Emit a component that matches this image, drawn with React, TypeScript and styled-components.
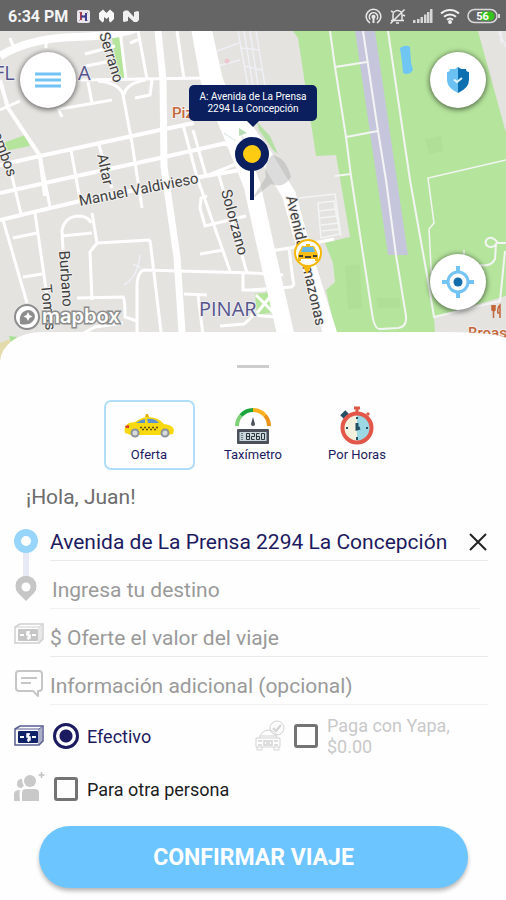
import React, { useState } from "react";
import styled, { createGlobalStyle } from "styled-components";

const NAVY = "#1c1a60";
const SKY = "#6cc5ff";

const GlobalStyle = createGlobalStyle`
  *, *::before, *::after { box-sizing: border-box; }
  body {
    margin: 0;
    background: #fff;
    font-family: Roboto, "Noto Sans", sans-serif;
    color: ${NAVY};
  }
  button, input { font: inherit; color: inherit; }
`;

const Screen = styled.div`
  display: flex;
  flex-direction: column;
  min-height: 100vh;
`;

const StatusBar = styled.header`
  display: flex;
  align-items: center;
  justify-content: space-between;
  height: 31px;
  padding: 1px 6px 0 8px;
  background: #656565;
  color: #f4f4f4;
`;

const StatusGroup = styled.div<{ $gap: number }>`
  display: flex;
  align-items: center;
  gap: ${(p) => p.$gap}px;
`;

const Clock = styled.time`
  font-size: 16px;
  font-weight: 700;
`;

const MapArea = styled.section`
  position: relative;
  height: 331px;
  overflow: hidden;
  background: #e4e3e0;
`;

const MapSvg = styled.svg`
  display: block;
  width: 100%;
  height: 100%;
`;

const StreetLabel = styled.text`
  font-family: Roboto, sans-serif;
  font-size: 15px;
  fill: #404040;
  stroke: #f1f0ee;
  stroke-width: 2px;
  paint-order: stroke;
`;

const DistrictLabel = styled.text`
  font-family: "Open Sans", sans-serif;
  font-size: 20px;
  fill: #55558c;
  stroke: #eeedf0;
  stroke-width: 2px;
  paint-order: stroke;
`;

const PlaceLabel = styled.text`
  font-family: Roboto, sans-serif;
  font-size: 15px;
  font-weight: 500;
  fill: #c4673a;
  stroke: #f3efec;
  stroke-width: 2px;
  paint-order: stroke;
`;

const MapboxWord = styled.text`
  font-family: Inter, sans-serif;
  font-size: 20px;
  font-weight: 600;
  fill: #fff;
  stroke: #8d8d8d;
  stroke-width: 3px;
  paint-order: stroke;
`;

const RoundButton = styled.button<{ $side: "left" | "right"; $top: number }>`
  position: absolute;
  top: ${(p) => p.$top}px;
  ${(p) => p.$side}: 20px;
  display: grid;
  place-items: center;
  width: 56px;
  height: 56px;
  padding: 0;
  border: 0;
  border-radius: 50%;
  background: #fff;
  box-shadow: 0 1px 5px 1px rgba(0, 0, 0, 0.5);
  cursor: pointer;
`;

const Callout = styled.div`
  position: absolute;
  top: 54px;
  left: 50%;
  width: 128px;
  padding: 6px 4px;
  transform: translateX(-50%);
  border-radius: 5px;
  background: #0b1f5e;
  color: #fff;
  font-size: 10px;
  line-height: 12px;
  text-align: center;

  &::after {
    content: "";
    position: absolute;
    top: 100%;
    left: 50%;
    transform: translateX(-50%);
    border: 6px solid transparent;
    border-top-color: #0b1f5e;
    border-bottom: 0;
  }
`;

const Sheet = styled.main`
  position: relative;
  flex: 1;
  margin-top: -30px;
  padding-bottom: 12px;
  border-radius: 42px 60px 0 0 / 30px 7px 0 0;
  background: #fefefe;
`;

const Handle = styled.div`
  width: 32px;
  height: 3px;
  margin: 33px auto 32px;
  background: #cdcdcd;
`;

const ServiceTabs = styled.div`
  display: flex;
  justify-content: center;
  gap: 13px;
`;

const ServiceTab = styled.button`
  display: flex;
  flex-direction: column;
  align-items: center;
  width: 91px;
  height: 70px;
  padding: 4px 0 0;
  border: 2px solid transparent;
  border-radius: 7px;
  background: transparent;
  font-size: 13px;
  line-height: 17px;
  cursor: pointer;

  &[aria-selected="true"] {
    border-color: #b0defa;
  }
`;

const Greeting = styled.p`
  margin: 0;
  padding: 15px 26px 4px;
  font-size: 21px;
  line-height: 24px;
  color: #6c6c6c;
`;

const Fields = styled.div`
  display: grid;
  grid-template-columns: 50px 1fr;
  padding-right: 18px;
`;

const Rail = styled.svg`
  grid-row: span 2;
`;

const FieldIcon = styled.label`
  display: block;
  height: 48px;
  padding: 13px 0 0 14px;
`;

const Field = styled.div<{ $short?: boolean; $faint?: boolean }>`
  display: flex;
  align-items: center;
  height: 48px;
  margin-right: ${(p) => (p.$short ? 8 : 0)}px;
  padding-top: 10px;
  border-bottom: 1px solid ${(p) => (p.$faint ? "#f1f1f1" : "#e9e9e9")};
`;

const TextInput = styled.input<{ $indent?: boolean }>`
  flex: 1;
  min-width: 0;
  padding: 0 0 0 ${(p) => (p.$indent ? 2 : 0)}px;
  border: 0;
  outline: 0;
  background: transparent;
  font-size: 21px;
  line-height: 28px;

  &::placeholder {
    color: #9a9a9a;
    opacity: 1;
  }
`;

const ClearButton = styled.button`
  display: grid;
  place-items: center;
  width: 20px;
  height: 24px;
  padding: 0;
  border: 0;
  background: transparent;
  cursor: pointer;
`;

const OptionsRow = styled.div<{ $height: number }>`
  display: grid;
  grid-template-columns: 241px 1fr;
  align-items: center;
  height: ${(p) => p.$height}px;
  padding-left: 14px;
`;

const Option = styled.label<{ $tone: string }>`
  display: flex;
  align-items: center;
  gap: 8px;
  color: ${(p) => p.$tone};
  font-size: 18px;
  line-height: 21px;
  white-space: pre-line;
`;

const Radio = styled.input`
  appearance: none;
  flex: none;
  width: 26px;
  height: 26px;
  margin: 0;
  border: 3px solid ${NAVY};
  border-radius: 50%;

  &:checked {
    background: radial-gradient(circle, ${NAVY} 6px, transparent 7px);
  }
`;

const CheckBox = styled.input`
  appearance: none;
  flex: none;
  width: 24px;
  height: 24px;
  margin: 1px;
  border: 3px solid #747474;
  border-radius: 3px;

  &:checked {
    background: #747474;
  }
`;

const ConfirmButton = styled.button`
  display: block;
  width: calc(100% - 77px);
  height: 62px;
  margin: 15px 38px 0 39px;
  border: 0;
  border-radius: 31px;
  background: ${SKY};
  box-shadow: 0 3px 4px rgba(0, 0, 0, 0.28);
  color: #fff;
  font-size: 23px;
  font-weight: 700;
  cursor: pointer;
`;

function StatusIcons() {
  return (
    <StatusGroup $gap={7}>
      <svg width="17" height="17" viewBox="0 0 17 17" fill="none" stroke="#e9e9e9" strokeWidth="1.5">
        <path d="M5 15A7.3 7.3 0 1 1 12 15" />
        <path d="M5.3 11.6A4.2 4.2 0 1 1 11.7 11.6" />
        <circle cx="8.5" cy="8.7" r="1.3" fill="#e9e9e9" />
        <path d="M8.5 10v5" strokeWidth="2" />
      </svg>
      <svg width="17" height="17" viewBox="0 0 17 17" fill="none" stroke="#e9e9e9" strokeWidth="1.5">
        <path d="M4 12V7a4.500 4.500 0 0 1 9 0v5M2 12.500h13M7 15h3M1.500 15.500l14-14M2 3l2 1M14 7l2 1" />
      </svg>
      <svg width="20" height="16" viewBox="0 0 20 16" fill="#d6d6d6">
        <path d="M0 12h2.500v3H0zM4 11h2.500v4H4zM7.500 9H10v6H7.500zM11 6.500h2.500V15H11zM14 4h2.500v11H14zM17 1h2.500v14H17z" />
      </svg>
      <svg width="20" height="16" viewBox="0 0 20 16" fill="none" stroke="#efefef" strokeWidth="2">
        <path d="M1 5.500a13 13 0 0 1 18 0M4 8.800a8.700 8.700 0 0 1 12 0M7 11.800a4.500 4.500 0 0 1 6 0" />
        <circle cx="10" cy="14" r="1" />
      </svg>
      <svg width="33" height="16" viewBox="0 0 33 16">
        <rect x="1" y="1.5" width="29" height="13" rx="6.5" fill="#656565" stroke="#d9d9d9" strokeWidth="1.500" />
        <path d="M14 3.500h9a4.500 4.500 0 0 1 0 9h-9z" fill="#35c41e" />
        <path d="M32 6v4" stroke="#d9d9d9" strokeWidth="2" />
        <text x="15.5" y="12" fontSize="11" fontWeight="700" textAnchor="middle" fill="#fff">56</text>
      </svg>
    </StatusGroup>
  );
}

function StatusApps() {
  return (
    <StatusGroup $gap={9}>
      <Clock>6:34 PM</Clock>
      <svg width="13" height="13" viewBox="0 0 13 13">
        <rect width="13" height="13" rx="2" fill="#e8e6ea" />
        <path d="M2 2l9 9M11 2l-9 9" stroke="#b59aa6" strokeWidth="1" />
        <path d="M4 2v8" stroke="#a83c52" strokeWidth="2" />
        <path d="M9 3v8M4 6.500h5" stroke="#3d3f91" strokeWidth="2" />
      </svg>
      <svg width="15" height="14" viewBox="0 0 15 14" fill="#f7f7f7">
        <path d="M0 4l4-3.500L7.500 4 11 .5 15 4v6l-3.500 3.500L10 12V8L7.500 10 5 8v4l-1.500 1.500L0 10z" />
      </svg>
      <svg width="16" height="13" viewBox="0 0 16 13" fill="#f0f0f0">
        <path d="M0 2l2-1.500h3L11 7V2l4-1 1 1v8l-2 2h-3L5 6.500V11l-4 1-1-1z" />
      </svg>
    </StatusGroup>
  );
}

function CityMap() {
  return (
    <MapSvg viewBox="0 31 506 331" preserveAspectRatio="xMidYMin slice" role="img" aria-label="Mapa">
      <rect x="-300" y="31" width="1200" height="331" fill="#e4e3e0" />
      <g fill="#b5e59c">
        <path d="M293 31H478L506 133V296L434 317L437 362H342L326 290L335 282L333 263L325 243L350 237L336 155L316 156L298 38z" />
        <path d="M111 31h8l6 47h-7z" />
        <path d="M3 143l22-8 5 11-25 5z" />
        <path d="M255 294l15-2 5 20-18 3z" />
      </g>
      <path d="M0 343l10-4v23H0z" fill="#e3dba9" />
      <path d="M9 336l8 1-6 5z" fill="#a5df93" />
      <g fill="#abd894" opacity=".4">
        <path d="M425 139l16-3 2 15-14 3zM345 266l15-2 2 44-14 1zM376 298h24v10h-22z" />
      </g>
      <path d="M355 31h20l33 224h-20z" fill="#c5c6db" />
      <path d="M400 48q6-4 10-1l1 15 2 8q-4 6-10 3l-1-11z" fill="#6fc6f2" />

      <g fill="none" stroke="#f3f5f4" strokeWidth="2">
        <path d="M330 31l5 36 11 70 5 39 21 137q2 16 8 16l18-1q9-1 8-12l-10-61-10-75-8-49-15-100" />
        <path d="M335 67l32-5M346 137l32-6M335 176l16-2" />
        <path d="M388 31l22 149 20 112 4 25 66-16 5-50" />
        <path d="M506 243h-8q-6-8-11-4c-5 7 5 11 9 5l-1 15q-4 8-15 6" />
        <path d="M506 160l-78 18 6 45-5 6 3 57M464 266v-16" strokeWidth="1.500" />
        <path d="M299 198l36-4 6 42M318 203l16-2 6 33-19 4zM319 211l17-2M320 218l17-2M321 225l18-2M322 231l18-2" strokeWidth="1.500" />
      </g>
      <g fill="none" stroke="#eef0f6" strokeWidth="1.500">
        <path d="M238 31l10 55M244 31l9 55M250 31l8 55M256 31l9 55M217 51l22-8M218 66l22-6M240 48l20 2M244 66l18 4" />
        <path d="M498 31l8 16M501 31v12M140 255q-2 22-16 30M133 264l8 4" />
      </g>

      <g fill="none" stroke="#fff" strokeWidth="3">
        <path d="M0 56Q30 38 75 37T140 27" strokeWidth="8" />
        <path d="M158 31l5 49 1 87 13 90 7 105" strokeWidth="7" />
        <path d="M199 25l10 55 21 50 22 55 11 50 29 127" strokeWidth="17" />
        <path d="M203 31l11 50 14 34" strokeWidth="18" />
        <path d="M238 118l27 37 24 40 16 58 34 109" strokeWidth="14" />
        <path d="M46 38v10M10 38l3 8M85 54l30-8M86 66l25-5M80 80l126-2M120 31l6 48M138 31l9 48M177 31l7 48M130 43l10-4" />
        <path d="M0 110l20-9M60 109l52-9M58 108l4 9M88 82l4 21M98 81q22 2 25 14l9 48 10 65M146 80q-20 3-22 15M135 98l15-3 2-15" />
        <path d="M0 80l8 28 32 48 5 40M0 165l40-9 120-26 34-7M0 193l72-16 88-19 66-15M0 220l80-19 120-24 52-9" strokeWidth="4" />
        <path d="M10 168l11 46M40 156l10 51M71 150l9 50M98 142l14 46M183 125l14 52 33 94M193 130l13 46M218 172l29 101M35 213l13 90M3 220l24 83" />
        <path d="M207 196l-6 2-1 10 5 18 41-10M200 254l23-4M143 270l110 3 30 2M143 270q-6 4-6 16v64M150 240l12 100M97 243l53-3M92 213l5 30-7 9 2 48" />
        <path d="M63 250l-1-20q3-14 18-14 9 1 11 7M62 236l30-3M13 238l24-5M23 277l19-3M77 298l46-1q2 2 2 20l12 4M80 335l15-8 28-4M184 294l23 1M198 295l5 40M243 273v17h22M220 326l24-2 9-8" />
        <path d="M252 290l39-3q4-1 2-7l-4-31M270 251l20-3 44-9M256 295l18 18M273 293l-16 20M250 315l25 2M262 150l-40-6M206 176l30-12" />
      </g>
      <path d="M257 122l13 14 8 18-5-4-14-20z" fill="#b5e0a4" />
      <path d="M239 128l8 5-8 3z" fill="#b8dcb4" />
      <path d="M224 133l12 8" stroke="#d5e6d8" strokeWidth="1" />
      <circle cx="227" cy="61" r="2.5" fill="#ecc7cf" />

      <DistrictLabel x="-6" y="80">FL</DistrictLabel>
      <DistrictLabel x="78" y="80">A</DistrictLabel>
      <DistrictLabel x="199" y="316">PINAR</DistrictLabel>
      <PlaceLabel x="172" y="118">Piz</PlaceLabel>
      <PlaceLabel x="468" y="338">Broas</PlaceLabel>
      <path d="M492 305v5q2 2 3 0v-5M493.500 305v13M500 318v-13q-3 3-2 8h2" fill="none" stroke="#c4673a" strokeWidth="1.500" />
      <StreetLabel transform="translate(99 34) rotate(73)">Serrano</StreetLabel>
      <StreetLabel transform="translate(97 155) rotate(78)">Altar</StreetLabel>
      <StreetLabel transform="translate(-8 134) rotate(70)">ombos</StreetLabel>
      <StreetLabel transform="translate(80 206) rotate(-11)">Manuel Valdivieso</StreetLabel>
      <StreetLabel transform="translate(221 191) rotate(75)">Solorzano</StreetLabel>
      <StreetLabel transform="translate(59 251) rotate(86)">Burbano</StreetLabel>
      <StreetLabel transform="translate(41 285) rotate(84)">Tomas</StreetLabel>
      <StreetLabel transform="translate(286 197) rotate(77)">Avenida</StreetLabel>
      <StreetLabel transform="translate(300 257) rotate(77)">Amazonas</StreetLabel>

      <circle cx="27" cy="317" r="12" fill="#fff" stroke="#8d8d8d" strokeWidth="2" />
      <path d="M20 324q-1-9 3-12 6-4 10 0t0 9q-4 5-13 3z" fill="#8d8d8d" />
      <path d="M28 312l1.500 3 3 1.500-3 1.500-1.500 3-1.500-3-3-1.500 3-1.500z" fill="#fff" />
      <MapboxWord x="42" y="323">mapbox</MapboxWord>

      <path d="M252 199l14-22q-3-12 6-22 14 2 19 22-7 12-20 7z" fill="#9b9b9b" opacity=".35" />
      <path d="M252 168v32" stroke="#0b1f5e" strokeWidth="4" />
      <circle cx="252" cy="154" r="13" fill="#fccb12" stroke="#0b1f5e" strokeWidth="8" />

      <path d="M302 265h10l-5 9z" fill="#f5b80a" />
      <circle cx="308" cy="253" r="13" fill="#fff" stroke="#f5b80a" strokeWidth="2" />
      <path d="M302 246h12l3 6 1 3v6h-3v-2h-14v2h-3v-6l1-3z" fill="#f7bd16" />
      <path d="M303 247h10l2 5h-14z" fill="#65b9e4" />
      <path d="M306 244h4v2h-4z" fill="#f7bd16" />
      <path d="M299 256h4M313 256h4M305 257h6" stroke="#4a4030" strokeWidth="2" />
    </MapSvg>
  );
}

function TaxiIcon() {
  return (
    <svg width="52" height="40" viewBox="0 0 52 40">
      <path d="M2 27q-2-7 4-10l6-1q7-5 13-5 10 0 16 7 9 1 10 6l-1 4-5 1H8z" fill="#f8d80e" />
      <path d="M22 11l1-3h2l1 3z" fill="#e0b000" />
      <path d="M13 17q4-3 9-4v4zM24 13q8-1 12 4H25z" fill="#5f92cf" />
      <path d="M2 20l4-1v3H3z" fill="#e23b2b" />
      <path d="M17 21.500h18M19 23.500h15" stroke="#5d5214" strokeWidth="1.500" strokeDasharray="2 2" />
      <g fill="#d8dcdf" stroke="#8d9499" strokeWidth="2">
        <circle cx="12" cy="27" r="3.500" />
        <circle cx="42" cy="27" r="3.500" />
      </g>
    </svg>
  );
}

function MeterIcon() {
  return (
    <svg width="40" height="40" viewBox="0 0 40 40">
      <g fill="none" strokeWidth="4">
        <path d="M4 20a16 16 0 0 1 4-10.500" stroke="#7fd077" />
        <path d="M8 9.500A16 16 0 0 1 20 4" stroke="#1ca53b" />
        <path d="M20 4A16 16 0 0 1 32 9.500" stroke="#ffb01e" />
        <path d="M32 9.500A16 16 0 0 1 36 20" stroke="#e89318" />
      </g>
      <path d="M20 11l2 7a2 2 0 0 1-4 0z" fill="#4c525c" />
      <rect x="4" y="23" width="32" height="15" rx="1" fill="#4b505b" />
      <rect x="6.500" y="26" width="27" height="9" fill="#c9d7dc" />
      <path d="M9 27v7" stroke="#71808a" strokeWidth="2" strokeDasharray="1 1" />
      <path d="M13.500 27.500h3v6h-3zM13.500 30.500h3M18.500 27.500h3v3h-3v3h3M26.500 27.500h-3v6h3v-3h-3M28.500 27.500h3v6h-3z" fill="none" stroke="#2d333d" strokeWidth="1" />
    </svg>
  );
}

function StopwatchIcon() {
  return (
    <svg width="40" height="40" viewBox="0 0 40 40">
      <path d="M17 2h6M20 2v5" stroke="#dc5a46" strokeWidth="3" />
      <path d="M5 11l5-5" stroke="#235064" strokeWidth="5" />
      <path d="M7 7l4 4" stroke="#235064" strokeWidth="2" />
      <path d="M30 9l2-2" stroke="#dc5a46" strokeWidth="3" />
      <circle cx="20" cy="22" r="15" fill="#f4f0de" />
      <path d="M20 7a15 15 0 0 1 0 30z" fill="#9bd8e4" />
      <circle cx="20" cy="22" r="14.500" fill="none" stroke="#e2574a" strokeWidth="4" />
      <path d="M20 11v2M20 31v3M9 22h2M29 22h2" stroke="#235064" strokeWidth="2" />
      <path d="M20 17v6l3-1" fill="none" stroke="#235064" strokeWidth="3" />
    </svg>
  );
}

function CashIcon({ color, fill }: { color: string; fill: string }) {
  return (
    <svg width="31" height="24" viewBox="0 0 31 24">
      <path d="M1 5l5-3h23v15l-4 4H1z" fill="#fff" stroke={color} strokeWidth="1.500" />
      <path d="M1 5h24v16M25 5l4-3M27 4v15" fill="none" stroke={color} strokeWidth="1" />
      <rect x="4" y="7" width="20" height="12" rx="1" fill={fill} />
      <path d="M6 13h4M18 13h4" stroke="#fff" strokeWidth="2" />
      <path d="M16 10h-3v3h3v3h-3M14.500 9v9" fill="none" stroke="#fff" strokeWidth="1.500" />
    </svg>
  );
}

function NoteIcon() {
  return (
    <svg width="30" height="28" viewBox="0 0 30 28" fill="none" stroke="#c6c6c6" strokeWidth="2">
      <path d="M5 1h20q3 0 3 3v14q0 3-3 3h-1v5l-5-5H5q-3 0-3-3V4q0-3 3-3z" strokeLinejoin="round" />
      <path d="M7 8h16M7 13h10" />
    </svg>
  );
}

function YapaIcon() {
  return (
    <svg width="30" height="32" viewBox="0 0 30 32" fill="none" stroke="#d3d3d3" strokeWidth="1">
      <circle cx="22" cy="8" r="7" />
      <path d="M18 8l3 3 5-6" strokeWidth="2" />
      <path d="M4 18q3-8 10-8 7 1 8 8M1 18h24v9H1zM2 27v3h5v-3M19 27v3h5v-3M5 16h17" />
      <path d="M3 21h4M19 21h4M9 21h8v4H9zM11 23h4M3 25h4M19 25h4" strokeWidth="1.500" />
    </svg>
  );
}

function PeopleIcon() {
  return (
    <svg width="31" height="36" viewBox="0 0 31 36" fill="#c9c9c9">
      <circle cx="16" cy="10" r="6" />
      <path d="M8 30V22q0-4 4-4h9q4 0 4 4v8zM0 30v-7q0-4 6-4-1 3 0 11z" />
      <path d="M8 8q-5 0-5 5 0 4 4 4l3-2q-2-3-2-7z" />
      <path d="M27.500 1v6M24.500 4h6" stroke="#c2c2c2" strokeWidth="1.500" />
    </svg>
  );
}

const services = [
  { name: "Oferta", icon: <TaxiIcon /> },
  { name: "Taxímetro", icon: <MeterIcon /> },
  { name: "Por Horas", icon: <StopwatchIcon /> },
];

export default function App() {
  const [service, setService] = useState("Oferta");
  const [origin, setOrigin] = useState("Avenida de La Prensa 2294 La Concepción");

  return (
    <Screen>
      <GlobalStyle />
      <StatusBar>
        <StatusApps />
        <StatusIcons />
      </StatusBar>

      <MapArea>
        <CityMap />
        <Callout>A: Avenida de La Prensa 2294 La Concepción</Callout>
        <RoundButton $side="left" $top={21} aria-label="Menú">
          <svg width="28" height="18" viewBox="0 0 28 18" stroke="#74c3f5" strokeWidth="3">
            <path d="M1 3h26M1 9h26M1 15h26" />
          </svg>
        </RoundButton>
        <RoundButton $side="right" $top={21} aria-label="Seguridad">
          <svg width="24" height="28" viewBox="0 0 24 28">
            <path d="M12 1l3 2h5q0 3 3 3v8q0 8-11 13z" fill="#0c6fb0" />
            <path d="M12 1L9 3H4q0 3-3 3v8q0 8 11 13z" fill="#6cc1f3" />
            <path d="M8 13.500l3 2.500 5-4" fill="none" stroke="#e4f4fc" strokeWidth="2" />
          </svg>
        </RoundButton>
        <RoundButton $side="right" $top={223} aria-label="Mi ubicación">
          <svg width="34" height="34" viewBox="0 0 34 34">
            <path d="M17 1v7M17 26v7M1 17h7M26 17h7" stroke="#74c3f5" strokeWidth="4" />
            <circle cx="17" cy="17" r="10" fill="#fff" stroke="#74c3f5" strokeWidth="3" />
            <circle cx="17" cy="17" r="4.500" fill="#126dad" />
          </svg>
        </RoundButton>
      </MapArea>

      <Sheet>
        <Handle />
        <ServiceTabs role="tablist">
          {services.map((s) => (
            <ServiceTab
              key={s.name}
              role="tab"
              aria-selected={service === s.name}
              onClick={() => setService(s.name)}
            >
              {s.icon}
              {s.name}
            </ServiceTab>
          ))}
        </ServiceTabs>

        <Greeting>¡Hola, Juan!</Greeting>

        <Fields>
          <Rail width="50" height="96" viewBox="0 0 50 96">
            <path d="M26 30v40" stroke="#e8e9f6" strokeWidth="6" />
            <circle cx="26" cy="28" r="8.500" fill="#fff" stroke="#97d5fb" strokeWidth="7" />
            <path d="M26 88l-8-8a10.500 10.500 0 1 1 16 0z" fill="#c6c6c6" />
            <circle cx="26" cy="74" r="4.500" fill="#fff" />
          </Rail>
          <Field>
            <TextInput
              aria-label="Origen"
              value={origin}
              onChange={(e) => setOrigin(e.target.value)}
            />
            <ClearButton aria-label="Borrar origen" onClick={() => setOrigin("")}>
              <svg width="18" height="18" viewBox="0 0 18 18" stroke="#222" strokeWidth="2">
                <path d="M1 1l16 16M17 1L1 17" />
              </svg>
            </ClearButton>
          </Field>
          <Field $short $faint>
            <TextInput $indent aria-label="Destino" placeholder="Ingresa tu destino" />
          </Field>

          <FieldIcon htmlFor="offer">
            <CashIcon color="#cfcfcf" fill="#c6c6c6" />
          </FieldIcon>
          <Field>
            <TextInput id="offer" aria-label="Valor del viaje" placeholder="$ Oferte el valor del viaje" />
          </Field>

          <FieldIcon htmlFor="note">
            <NoteIcon />
          </FieldIcon>
          <Field $faint>
            <TextInput id="note" aria-label="Información adicional" placeholder="Información adicional (opcional)" />
          </Field>
        </Fields>

        <OptionsRow $height={62}>
          <Option $tone={NAVY}>
            <CashIcon color="#5a5e92" fill="#102268" />
            <Radio type="radio" name="payment" defaultChecked />
            Efectivo
          </Option>
          <Option $tone="#c9c9c9">
            <YapaIcon />
            <CheckBox type="checkbox" />
            {"Paga con Yapa,\n$0.00"}
          </Option>
        </OptionsRow>
        <OptionsRow $height={44}>
          <Option $tone="#1c1c1c">
            <PeopleIcon />
            <CheckBox type="checkbox" />
            Para otra persona
          </Option>
        </OptionsRow>

        <ConfirmButton>CONFIRMAR VIAJE</ConfirmButton>
      </Sheet>
    </Screen>
  );
}
